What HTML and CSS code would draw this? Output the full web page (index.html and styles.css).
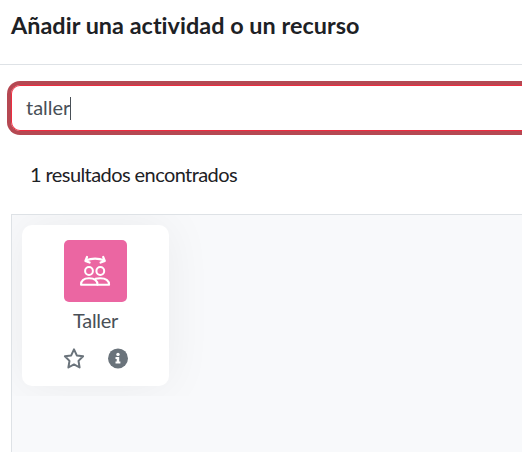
FILE: index.html
```html
<!DOCTYPE html>
<html lang="es">
<head>
<meta charset="utf-8">
<title>Añadir una actividad o un recurso</title>
<link rel="stylesheet" href="styles.css">
</head>
<body>
<div class="modal">
  <header class="modal-header"><h1>Añadir una actividad o un recurso</h1></header>
  <main class="modal-body">
    <div class="search"><span class="query">taller</span><i class="caret"></i></div>
    <p class="count">1 resultados encontrados</p>
    <section class="results">
      <div class="options">
        <article class="card">
          <div class="tile">
            <svg width="32" height="32" viewBox="0 0 32 32" fill="none" stroke="#fff" stroke-width="2" stroke-linecap="round" stroke-linejoin="round">
              <circle cx="10" cy="16" r="3.900"/>
              <circle cx="21.300" cy="16" r="3.900"/>
              <path d="M2 29.800c0-4.400 3-6.600 8-6.600s8.500 2.200 8.500 6.600z"/>
              <path d="M16.500 23.700c1.300-.4 2.800-.5 4.600-.5 5.400 0 9 2.200 9 6.600H18.400"/>
              <path d="M6.600 5.600c6-2.600 13-2.600 19 0M8 2 6.400 5.900l4.200 1.700M24.200 2l1.600 3.900-4.200 1.700" stroke-width="2.200"/>
            </svg>
          </div>
          <div class="name">Taller</div>
          <div class="actions">
            <svg width="22" height="21" viewBox="0 0 22 21"><path d="m11 1.400 2.800 6 6.300.9-4.600 4.600 1.100 6.600-5.600-3.100-5.600 3.100 1.100-6.600-4.600-4.600 6.300-.9z" fill="none" stroke="#6a737b" stroke-width="2" stroke-linejoin="round"/></svg>
            <svg width="20" height="21" viewBox="0 0 20 21"><circle cx="10" cy="10.400" r="10" fill="#6a737b"/><circle cx="10" cy="6.400" r="1.700" fill="#fff"/><path d="M7.500 9h3.700v4.600h1.200v2H7.500v-2h1.200v-2.700H7.500z" fill="#fff"/></svg>
          </div>
        </article>
      </div>
    </section>
  </main>
</div>
</body>
</html>
```
FILE: styles.css
```css
* { box-sizing: border-box; }
body { margin: 0; overflow: hidden; background: #fff; color: #1d2125; font-family: Lato, "Liberation Sans", sans-serif; font-size: 20px; font-variant-ligatures: none; }
.modal { height: 452px; display: flex; flex-direction: column; }
.modal-header { height: 65px; padding: 9px 11px; border-bottom: 1px solid #dee2e6; }
h1 { margin: 0; font-size: 23.4px; line-height: 32px; font-weight: 700; letter-spacing: .03px; white-space: nowrap; }
.modal-body { flex: 1; display: flex; flex-direction: column; padding: 20px 0 0 11px; }
.search { height: 46px; display: flex; align-items: center; padding: 0 0 0 14px; border: 1px solid #ee2c40; border-right: 0; border-radius: 9px 0 0 9px; box-shadow: 0 0 0 4px #b54852; color: #495057; }
.query { padding-bottom: 2px; }
.caret { width: 1px; height: 23px; background: #495057; }
.count { margin: 28px 19px 25px; line-height: 30px; letter-spacing: -.58px; }
.results { flex: 1; border: 1px solid #dee2e6; border-width: 1px 0 0 1px; background: #f8f9fb; }
.options { height: 181px; padding: 10px; overflow: hidden; }
.card { width: 147px; height: 161px; display: flex; flex-direction: column; align-items: center; padding-top: 15px; border-radius: 10px; background: #fff; box-shadow: 0 0 48px rgba(0, 0, 0, .06); }
.tile { width: 63px; height: 62px; display: flex; align-items: center; justify-content: center; padding-right: 1px; border-radius: 5px; background: #eb66a2; }
.name { margin-top: 3px; line-height: 30px; color: #495057; letter-spacing: -.3px; }
.actions { display: flex; gap: 23px; margin-top: 13px; }
.actions svg { display: block; }
```
